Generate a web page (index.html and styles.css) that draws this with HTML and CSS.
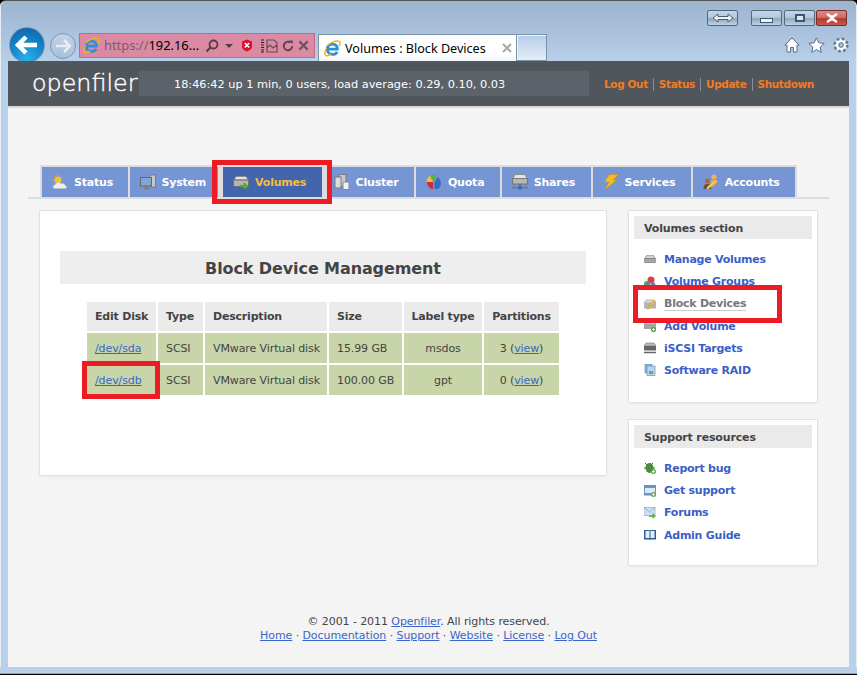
FILE: index.html
```html
<!DOCTYPE html>
<html lang="en">
<head>
    <meta charset="UTF-8">
    <title>Volumes : Block Devices</title>
    <link rel="stylesheet" href="styles.css">
</head>
<body>
<svg class="defs" width="0" height="0">
    <symbol id="ie" viewBox="0 0 18 18">
        <path d="M3.5 9.6h10.6c.2-3-1.900-5.300-4.900-5.300-3.200 0-5.700 2.300-5.700 5.500 0 3.300 2.500 5.500 5.600 5.500 2.300 0 3.900-1 4.800-2.800" fill="none" stroke="#2f8fd8" stroke-width="3"/>
        <path d="M3 6.500C6 3 12 .5 15.500 1.200c2 .5 1.800 3 .6 5.300M2.800 8.500C1 11.500.2 15 1.800 16.200c1.500 1 4-.2 5.700-1.500" fill="none" stroke="#e8b41e" stroke-width="1.500"/>
    </symbol>
    <symbol id="drive" viewBox="0 0 16 16">
        <path d="M3 3.500h10l2 4H1z" fill="#d8d8d8" stroke="#8b8b8b"/>
        <rect x="1" y="7.500" width="14" height="5" fill="#a9a9a9" stroke="#777"/>
    </symbol>
</svg>
<div class="window">
    <div class="chrome">
        <div class="caption">
            <span class="capbtn compat">
                <svg width="22" height="10" viewBox="0 0 22 10"><path d="M1 5l5-4v2.500h10V1l5 4-5 4V6.500H6V9z" fill="#eef3f9" stroke="#4d5a68"/></svg>
            </span>
            <span class="capbtn minimize"><i class="min-bar"></i></span>
            <span class="capbtn maximize"><i class="max-box"></i></span>
            <span class="capbtn close">
                <svg width="14" height="10" viewBox="0 0 14 10"><path d="M2 1l5 3 5-3M2 9l5-3 5 3M2 1l10 8M12 1L2 9" stroke="#fff" stroke-width="2.200" fill="none"/></svg>
            </span>
        </div>
        <div class="navrow">
            <span class="back">
                <svg width="24" height="20" viewBox="0 0 24 20"><path d="M11 2L3 10l8 8M3 10h19" fill="none" stroke="#fff" stroke-width="4.500"/></svg>
            </span>
            <span class="forward">
                <svg width="16" height="14" viewBox="0 0 16 14"><path d="M9 1l6 6-6 6M15 7H1" fill="none" stroke="#e6edf5" stroke-width="2.500"/></svg>
            </span>
            <div class="address">
                <svg class="ie-icon" width="17" height="17"><use href="#ie"/></svg>
                <span class="url"><span class="scheme">https://</span>192.16...</span>
                <svg class="addr-search" width="14" height="14" viewBox="0 0 14 14"><circle cx="8.500" cy="5.500" r="4" fill="none" stroke="#5b3a48" stroke-width="1.800"/><path d="M5.500 8.500L1.500 12.500" stroke="#5b3a48" stroke-width="2.200"/></svg>
                <i class="addr-caret"></i>
                <svg class="addr-error" width="12" height="13" viewBox="0 0 12 13"><path d="M6 .5l5 2v5c0 2-2 4-5 5-3-1-5-3-5-5v-5z" fill="#d8112e"/><path d="M3.800 4l4.400 4.500M8.200 4L3.800 8.500" stroke="#fff" stroke-width="1.500"/></svg>
                <svg class="addr-compat" width="18" height="14" viewBox="0 0 18 14"><path d="M1 1h3M1 3.500h3M1 6h3M1 8.500h3M1 11h3M1 13h3" stroke="#222" stroke-width="1.200"/><path d="M7 1h7l3 3v9H7zM7 9l3-3 3 3 4-3" fill="none" stroke="#6b4a58" stroke-width="1.200"/></svg>
                <svg class="addr-reload" width="12" height="12" viewBox="0 0 14 14"><path d="M12 7a5 5 0 1 1-2-4" fill="none" stroke="#5b4652" stroke-width="2.300"/><path d="M8 .5h4.500V5z" fill="#5b4652"/></svg>
                <svg class="addr-stop" width="11" height="11" viewBox="0 0 12 12"><path d="M1.500 1.500l9 9M10.500 1.500l-9 9" stroke="#6a5560" stroke-width="2.400"/></svg>
            </div>
            <div class="tab-browser">
                <svg class="ie-icon" width="17" height="17"><use href="#ie"/></svg>
                <span class="tab-title">Volumes : Block Devices</span>
                <svg class="tab-close" width="10" height="10" viewBox="0 0 10 10"><path d="M1 1l8 8M9 1l-8 8" stroke="#a9a9a9" stroke-width="2.200"/></svg>
            </div>
            <div class="tab-new"></div>
            <div class="tools">
                <svg width="16" height="16" viewBox="0 0 16 16"><path d="M8 1L.8 8H3v7h3.500v-4.500h3V15H13V8h2.200z" fill="#fff" stroke="#5c7188"/></svg>
                <svg width="17" height="16" viewBox="0 0 17 16"><path d="M8.500.8l2.300 5 5.400.6-4 3.600 1.100 5.300-4.800-2.700-4.800 2.700L4.800 10l-4-3.600 5.400-.6z" fill="#fff" stroke="#5c7188"/></svg>
                <svg width="16" height="16" viewBox="0 0 16 16"><circle cx="8" cy="8" r="4.500" fill="none" stroke="#fff" stroke-width="3"/><circle cx="8" cy="8" r="6.300" fill="none" stroke="#64788d" stroke-width="2.600" stroke-dasharray="2.500 2.450"/><circle cx="8" cy="8" r="2.200" fill="none" stroke="#64788d"/></svg>
            </div>
        </div>
    </div>

    <div class="page">
        <div class="header">
            <div class="logo">openfiler</div>
            <div class="uptime">18:46:42 up 1 min, 0 users, load average: 0.29, 0.10, 0.03</div>
            <div class="toplinks">
                <a>Log Out</a><a>Status</a><a>Update</a><a>Shutdown</a>
            </div>
        </div>

        <div class="tabbar">
            <div class="tabs">
                <a class="tab">
                    <svg width="16" height="16" viewBox="0 0 16 16"><circle cx="6" cy="6" r="3.500" fill="#f4c430"/><path d="M6 0v2M0 6h2M1.800 1.800l1.400 1.400M10.200 1.800L8.800 3.200M1.800 10.200l1.400-1.400" stroke="#e9a81c"/><path d="M3 14.500c-2.500 0-2.500-3.500 0-3.500 .5-2.500 5-3.500 6-1 2-1 4.500 0 4 1.500 2 .2 2.500 3 0 3z" fill="#eef0f2" stroke="#b9c2cc" stroke-width=".6"/></svg>
                    Status
                </a>
                <a class="tab tab-prev">
                    <svg width="16" height="16" viewBox="0 0 16 16"><rect x="10" y="1" width="5.500" height="12" fill="#c9c9c9" stroke="#7a7a7a"/><rect x=".5" y="3.500" width="11" height="8.500" fill="#7fa6d6" stroke="#666"/><path d="M4 14.500h5M6.500 12v2.500" stroke="#777" stroke-width="1.500"/></svg>
                    System
                </a>
                <a class="tab tab-active">
                    <svg width="16" height="16" viewBox="0 0 16 16"><path d="M3 2.500h10l2 3.500H1z" fill="#e6e6e6" stroke="#8b8b8b"/><rect x=".5" y="6" width="15" height="6.500" fill="#b5b5b5" stroke="#6f6f6f"/><path d="M7 11.500h4V9l4.500 3.500L11 16v-2.500H7z" fill="#5fb03a" stroke="#2f7a1d" stroke-width=".5"/></svg>
                    Volumes
                </a>
                <a class="tab">
                    <svg width="16" height="16" viewBox="0 0 16 16"><rect x="5" y=".5" width="7" height="12" fill="#c9c9c9" stroke="#7a7a7a"/><rect x="1" y="3" width="6" height="11" fill="#dcdcdc" stroke="#7a7a7a"/><rect x="9" y="8" width="6" height="7.500" rx="1" fill="#eef1f4" stroke="#7a8a99"/></svg>
                    Cluster
                </a>
                <a class="tab">
                    <svg width="16" height="16" viewBox="0 0 16 16"><path d="M7 8L4 1.500C6 .5 9 .5 10.500 2z" fill="#5fb03a"/><path d="M7 8H.5C.5 5 2 3 4 1.500z" fill="#e8c33a"/><path d="M7 8H.8C1 11.500 3.500 15 7 15z" fill="#d9283c"/><path d="M8.500 8.500l3-5.500c3 2 4 6 3 9-1 2.500-3 3-4.500 3H8.500z" fill="#2f6fc4"/></svg>
                    Quota
                </a>
                <a class="tab">
                    <svg width="16" height="16" viewBox="0 0 16 16"><path d="M3 .5h10l2 4H1z" fill="#e4e4e4" stroke="#8b8b8b"/><rect x=".5" y="4.500" width="15" height="5.500" fill="#b5b5b5" stroke="#777"/><path d="M0 13.500h16" stroke="#777" stroke-width="1.500"/><path d="M8 10v3" stroke="#555"/><rect x="6" y="12.500" width="4" height="3" fill="#2f6fc4"/></svg>
                    Shares
                </a>
                <a class="tab">
                    <svg width="16" height="16" viewBox="0 0 16 16"><path d="M6 .5h9.500L10 6h4L2 15.500l4-7.500H1.500z" fill="#f0bd2c" stroke="#c98f14" stroke-width=".6"/></svg>
                    Services
                </a>
                <a class="tab">
                    <svg width="16" height="16" viewBox="0 0 16 16"><circle cx="11" cy="3" r="2.600" fill="#eeb35e"/><path d="M7 15l1-8c1-1.500 5-1.500 6 0l1 1z" fill="#eeb35e"/><circle cx="4.500" cy="7" r="2.400" fill="#a86a32"/><path d="M.5 15c0-4 1.500-5 4-5s3.500 1 4 5z" fill="#7a4a26"/><path d="M3 16l1-3 9-8 1.500 2-9 8z" fill="#f3cf6b" stroke="#a67a1e" stroke-width=".5"/><path d="M1 15.500l2-3 1 2z" fill="#2f6fc4"/></svg>
                    Accounts
                </a>
            </div>
        </div>

        <div class="columns">
            <div class="card main-card">
                <h1 class="page-title">Block Device Management</h1>
                <table class="disks">
                    <thead>
                        <tr>
                            <th class="left col-disk">Edit Disk</th>
                            <th class="left col-type">Type</th>
                            <th class="left col-desc">Description</th>
                            <th class="left col-size">Size</th>
                            <th class="col-label">Label type</th>
                            <th class="col-parts">Partitions</th>
                        </tr>
                    </thead>
                    <tbody>
                        <tr>
                            <td class="left"><a href="#">/dev/sda</a></td>
                            <td class="left">SCSI</td>
                            <td class="left">VMware Virtual disk</td>
                            <td class="left">15.99 GB</td>
                            <td>msdos</td>
                            <td>3 (<a href="#">view</a>)</td>
                        </tr>
                        <tr>
                            <td class="left"><a href="#">/dev/sdb</a></td>
                            <td class="left">SCSI</td>
                            <td class="left">VMware Virtual disk</td>
                            <td class="left">100.00 GB</td>
                            <td>gpt</td>
                            <td>0 (<a href="#">view</a>)</td>
                        </tr>
                    </tbody>
                </table>
            </div>
            <div class="sidebar">
                <div class="card side-card">
                    <h3 class="side-title">Volumes section</h3>
                    <ul class="side-links">
                        <li><svg width="12" height="12"><use href="#drive"/></svg><a>Manage Volumes</a></li>
                        <li><svg width="12" height="12" viewBox="0 0 12 12"><circle cx="7" cy="4" r="3.500" fill="#d9404a"/><circle cx="3" cy="8" r="3" fill="#4f9a83"/><circle cx="9" cy="9" r="2.500" fill="#5f86c4"/></svg><a>Volume Groups</a></li>
                        <li class="current"><svg width="12" height="12" viewBox="0 0 12 12"><path d="M2 2h8l2 3H0z" fill="#ddd" stroke="#999" stroke-width=".6"/><rect x="0" y="5" width="12" height="5.500" fill="#b5b5b5"/><path d="M3 11l1-2 6-7 1.500 1.500-6 7z" fill="#eec04a" stroke="#a67a1e" stroke-width=".4"/></svg><a>Block Devices</a></li>
                        <li><svg width="12" height="12" viewBox="0 0 12 12"><path d="M2 1h8l2 3H0z" fill="#ddd" stroke="#999" stroke-width=".6"/><rect x="0" y="4" width="12" height="5" fill="#a5a5a5"/><circle cx="9.500" cy="9.500" r="2.500" fill="#4f9e3a"/><path d="M8 9.500h3M9.500 8v3" stroke="#fff" stroke-width=".8"/></svg><a>Add Volume</a></li>
                        <li><svg width="12" height="12" viewBox="0 0 12 12"><path d="M2 1h8l2 3H0z" fill="#bbb" stroke="#777" stroke-width=".6"/><rect x="0" y="4" width="12" height="4.500" fill="#666"/><path d="M0 10.500h12" stroke="#666" stroke-width="1.500"/></svg><a>iSCSI Targets</a></li>
                        <li><svg width="12" height="12" viewBox="0 0 12 12"><rect x="1" y="0" width="7" height="9" fill="#8fb4e0" stroke="#5a82b8" stroke-width=".6"/><rect x="3" y="2" width="8" height="9.500" fill="#bcd3ee" stroke="#5a82b8" stroke-width=".6"/><rect x="5" y="7" width="4" height="3" fill="#6fae5a"/></svg><a>Software RAID</a></li>
                    </ul>
                </div>
                <div class="card side-card support-card">
                    <h3 class="side-title">Support resources</h3>
                    <ul class="side-links">
                        <li><svg width="12" height="12" viewBox="0 0 12 12"><ellipse cx="5.500" cy="6" rx="4" ry="5" fill="#4d8a3c"/><path d="M1 1l2 2M9 1L7 3M0 6h2M9 6h2" stroke="#3f7431"/><circle cx="9.500" cy="9.500" r="2.500" fill="#5fae48"/><path d="M8 9.500h3M9.500 8v3" stroke="#fff" stroke-width=".8"/></svg><a>Report bug</a></li>
                        <li><svg width="12" height="12" viewBox="0 0 12 12"><rect x="0" y="0" width="12" height="10.500" fill="#6d92c4"/><rect x="1" y="3" width="10" height="5" fill="#dfe9f5"/><circle cx="9.500" cy="9.500" r="2.500" fill="#5fae48"/><path d="M8 9.500h3M9.500 8v3" stroke="#fff" stroke-width=".8"/></svg><a>Get support</a></li>
                        <li><svg width="12" height="12" viewBox="0 0 12 12"><rect x="0" y="0.500" width="11" height="8" fill="#cfe0f3" stroke="#7c9cc4" stroke-width=".6"/><path d="M0 .5l5.500 4.500L11 .5" fill="none" stroke="#7c9cc4" stroke-width=".7"/><path d="M5 8.500h3.500V6L12 9l-3.500 3V10H5z" fill="#5fae48"/></svg><a>Forums</a></li>
                        <li><svg width="12" height="12" viewBox="0 0 12 12"><path d="M0 1h5.500l.5 1 .5-1H12v9.500H6.500l-.5 1-.5-1H0z" fill="#2f5f94"/><path d="M1.500 2h4v7h-4zM6.500 2h4v7h-4z" fill="#e8eef5"/></svg><a>Admin Guide</a></li>
                    </ul>
                </div>
            </div>
        </div>

        <div class="footer">
            <div>&copy; 2001 - 2011 <a href="#">Openfiler</a>. All rights reserved.</div>
            <div><a href="#">Home</a> &middot; <a href="#">Documentation</a> &middot; <a href="#">Support</a> &middot; <a href="#">Website</a> &middot; <a href="#">License</a> &middot; <a href="#">Log Out</a></div>
        </div>
    </div>

    <div class="frame-bottom"></div>

    <!-- red callouts drawn over the screenshot -->
    <div class="callout callout-tab"></div>
    <div class="callout callout-sdb"></div>
    <div class="callout callout-block"></div>
</div>
</body>
</html>
```

FILE: styles.css
```css
body {
    margin: 0;
    background: #000;
    font-family: "DejaVu Sans", sans-serif;
    font-size: 11px;
    color: #444;
}
.defs {
    position: absolute;
}
.window {
    position: relative;
    width: 857px;
    height: 675px;
    overflow: hidden;
    box-sizing: border-box;
    border-top: 1px solid #555;
    border-bottom: 1px solid #000;
    border-radius: 6px 6px 0 0;
    background: linear-gradient(#9db4cf 0, #a9c1dc 30px, #b9d0ea 60px);
    box-shadow: inset 1px 0 0 #e5edf5, inset -1px 0 0 #e5edf5;
}

/* browser chrome */
.chrome {
    height: 60px;
    overflow: hidden;
}
.caption {
    display: flex;
    justify-content: flex-end;
    height: 25px;
    padding: 9px 10px 0 0;
    box-sizing: border-box;
}
.capbtn {
    display: flex;
    align-items: center;
    justify-content: center;
    width: 31px;
    height: 16px;
    margin-left: 1px;
    border: 1px solid #55677c;
    border-radius: 2px;
    box-sizing: border-box;
    background: linear-gradient(#c3d4e6 0, #b5c9de 45%, #8ea6c0 55%, #c0d3e6 100%);
}
.compat {
    margin-right: 12px;
}
.maximize {
    margin-left: 2px;
}
.close {
    background: linear-gradient(#d98a80 0, #cf6f62 45%, #b23a2e 55%, #c9584a 100%);
    border-color: #7a2a2a;
}
.min-bar {
    width: 11px;
    height: 3px;
    margin-top: 4px;
    border: 1px solid #40566e;
    background: #eef3f8;
}
.max-box {
    width: 6px;
    height: 4px;
    border: 2px solid #40566e;
    background: #dfe8f2;
}
.navrow {
    display: flex;
    align-items: flex-start;
    height: 35px;
    padding-left: 9px;
}
.back {
    display: flex;
    align-items: center;
    justify-content: center;
    flex: none;
    width: 36px;
    height: 36px;
    margin-top: 1px;
    border-radius: 50%;
    border: 1px solid #7f97b0;
    box-sizing: border-box;
    background: radial-gradient(circle at 50% 90%, #28b0ea 0, #1480c8 55%, #0e5f9f 100%);
}
.forward {
    display: flex;
    align-items: center;
    justify-content: center;
    flex: none;
    width: 26px;
    height: 26px;
    margin: 7px 0 0 5px;
    border-radius: 50%;
    border: 1px solid #7f97b0;
    box-sizing: border-box;
    background: linear-gradient(#c2d3e6, #a9c0da);
}
.address {
    display: flex;
    align-items: center;
    flex: none;
    width: 236px;
    height: 25px;
    margin: 7px 0 0 3px;
    padding-left: 3px;
    border: 1px solid #c9657d;
    box-sizing: border-box;
    background: #da8ba3;
    font-family: "Noto Sans", sans-serif;
    font-size: 12.900px;
    color: #000;
}
.url {
    margin-left: 4px;
    width: 96px;
    flex: none;
    white-space: nowrap;
    position: relative;
    top: -1px;
}
.scheme {
    color: #7d5c68;
}
.addr-search {
    margin-left: 5px;
}
.addr-caret {
    width: 0;
    height: 0;
    margin: 1px 0 0 6px;
    border: 4px solid transparent;
    border-top-color: #5b3a48;
    border-bottom: 0;
}
.addr-error {
    margin-left: 8px;
}
.addr-compat {
    margin-left: 7px;
}
.addr-reload {
    margin-left: 4px;
}
.addr-stop {
    margin-left: 4px;
}
.tab-browser {
    display: flex;
    align-items: center;
    flex: none;
    width: 199px;
    height: 27px;
    margin: 8px 0 0 3px;
    padding-left: 5px;
    border: 1px solid #7b91a8;
    border-bottom: 0;
    box-sizing: border-box;
    background: linear-gradient(#fff, #fff 70%, #f1f5fa);
    font-family: "Noto Sans", sans-serif;
    font-size: 12.600px;
    color: #000;
}
.tab-title {
    margin-left: 4px;
    white-space: nowrap;
}
.tab-close {
    margin-left: 16px;
}
.tab-new {
    flex: none;
    width: 30px;
    height: 27px;
    margin-top: 8px;
    border: 1px solid #7b91a8;
    border-left: 0;
    box-shadow: inset 1px 1px 0 #eef4fb;
    box-sizing: border-box;
    background: linear-gradient(#b5cce8, #e3edf8);
}
.tools {
    display: flex;
    align-items: center;
    gap: 8px;
    margin: 11px 0 0 auto;
    padding-right: 8px;
}

/* openfiler page */
.page {
    height: 606px;
    margin: 0 8px;
    background: #f4f4f4;
}
.header {
    display: flex;
    align-items: center;
    height: 45px;
    border-bottom: 2px solid #d9d9d9;
    background: #50565c;
}
.logo {
    width: 131px;
    flex: none;
    padding: 0 0 2px 24px;
    box-sizing: border-box;
    font-weight: 200;
    font-size: 23.800px;
    -webkit-text-stroke: 0.4px #fff;
    color: #fff;
    white-space: nowrap;
}
.uptime {
    width: 450px;
    flex: none;
    height: 25px;
    line-height: 27px;
    padding-left: 35px;
    box-sizing: border-box;
    background: #5b6269;
    color: #fff;
    font-size: 11.300px;
    white-space: nowrap;
}
.toplinks {
    display: flex;
    margin: 2px 0 0 15px;
    font-size: 10.500px;
    letter-spacing: -0.38px;
    font-weight: bold;
    color: #f47b20;
}
.toplinks a {
    padding: 0 5px;
    line-height: 13px;
    border-left: 1px solid #8a8f94;
}
.toplinks a:first-child {
    border-left: 0;
    padding-left: 0;
}
.tabbar {
    margin: 57px 20px 0;
    padding-left: 12px;
    border-bottom: 2px solid #ddd;
}
.tabs {
    display: inline-flex;
    gap: 2px;
    padding: 2px 2px 0;
    background: #ddd;
    vertical-align: bottom;
}
.tab {
    display: flex;
    align-items: center;
    gap: 6px;
    height: 30px;
    padding: 0 15.400px 0 10px;
    box-sizing: border-box;
    background: #7595d5;
    color: #fff;
    font-weight: bold;
    letter-spacing: -0.2px;
}
.tab-prev {
    gap: 5px;
    padding-right: 12px;
}
.tab-active {
    margin: 0 3px;
    background: #4365ad;
    color: #f3bd3f;
}
.tab-active + .tab {
    padding-left: 7px;
}
.columns {
    display: flex;
    gap: 23px;
    margin: 12px 0 0 32px;
}
.card {
    background: #fff;
    box-shadow: 0 0 0 1px #e2e2e2, 0 1px 3px rgba(0,0,0,0.1);
}
.main-card {
    width: 566px;
    height: 264px;
    padding: 40px 20px 0;
    box-sizing: border-box;
}
.page-title {
    margin: 0 0 16px;
    height: 33px;
    line-height: 35px;
    background: #eee;
    text-align: center;
    font-size: 16px;
    letter-spacing: -0.1px;
    color: #444;
}
.disks {
    table-layout: fixed;
    width: 476px;
    margin-left: 25px;
    border-spacing: 2px;
    border-collapse: separate;
    text-align: center;
    letter-spacing: -0.1px;
}
.disks th {
    box-sizing: border-box;
    height: 29px;
    padding: 0;
    background: #ebebeb;
    letter-spacing: -0.2px;
}
.disks td {
    height: 30px;
    padding: 0;
    background: #c7d5a8;
}
.disks .left {
    padding-left: 8px;
    text-align: left;
}
.col-disk { width: 69px; }
.col-type { width: 45px; }
.col-desc { width: 122px; }
.col-size { width: 73px; }
.col-label { width: 78px; }
.col-parts { width: 75px; }
.disks a,
.footer a {
    color: #3a66c8;
    text-decoration: underline;
}
.sidebar {
    width: 188px;
}
.side-card {
    height: 191px;
    padding: 5px;
    box-sizing: border-box;
}
.support-card {
    height: 145px;
    margin-top: 18px;
}
.side-title {
    margin: 0 0 9.400px;
    height: 23px;
    line-height: 25px;
    padding-left: 10px;
    background: #eaeaea;
    font-size: 11px;
    letter-spacing: -0.15px;
    color: #444;
}
.side-links {
    margin: 0;
    padding: 0 0 0 10px;
    list-style: none;
}
.side-links li {
    display: flex;
    align-items: center;
    gap: 8px;
    height: 22.200px;
    font-weight: bold;
    letter-spacing: -0.25px;
    color: #3a5fc8;
}
.side-links .current {
    color: #777;
}
.side-links .current a {
    border-bottom: 1px solid #ccc;
    line-height: 13px;
}
.footer {
    margin-top: 50px;
    text-align: center;
    line-height: 14px;
    font-size: 11px;
    letter-spacing: -0.08px;
}
.frame-bottom {
    height: 6px;
    border-bottom: 1px solid #3fc0e8;
    background: #b9d0ea;
}

/* callouts */
.callout {
    position: absolute;
    border: 5px solid #ed1c24;
    box-sizing: border-box;
}
.callout-tab {
    left: 212px;
    top: 159px;
    width: 120px;
    height: 44px;
}
.callout-sdb {
    left: 82px;
    top: 360px;
    width: 78px;
    height: 38px;
}
.callout-block {
    left: 633px;
    top: 284px;
    width: 149px;
    height: 38px;
}
```
